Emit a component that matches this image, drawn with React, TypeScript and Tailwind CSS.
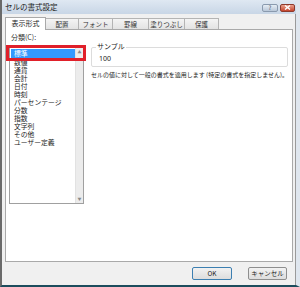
const jp = { fontFamily: '"Meiryo UI", "Noto Sans CJK JP", "Noto Sans", sans-serif' };

const categories = ['数値', '通貨', '会計', '日付', '時刻', 'パーセンテージ', '分数', '指数', '文字列', 'その他', 'ユーザー定義'];

const tabs = [
  { label: '配置', w: 'w-[33px]' },
  { label: 'フォント', w: 'w-[34px]' },
  { label: '罫線', w: 'w-[36px]' },
  { label: '塗りつぶし', w: 'w-[36px]' },
  { label: '保護', w: 'w-[34px]' },
];

export default function App() {
  return (
    <div
      style={jp}
      className="w-[300px] h-[287px] flex flex-col bg-[#f0f0f0] border-l-2 border-l-[#6a6a6a] border-r-4 border-r-[#dfe6ee] border-b-2 border-b-[#1c4d5d] text-[#1b1b1b] overflow-hidden"
    >
      {/* title bar */}
      <div className="h-[14px] shrink-0 flex items-center bg-gradient-to-b from-[#dfe8f2] to-[#c8d6e6] pl-[3px] pr-[1px]">
        <span className="text-[7.5px] leading-none text-[#222]">セルの書式設定</span>
        <div className="ml-auto flex gap-[2px] pt-[1px]">
          <div className="w-[16px] h-[8px] rounded-[2px] border border-[#8a9aae] bg-gradient-to-b from-[#e6edf5] to-[#b9c7d8] flex items-center justify-center text-[6px] leading-none text-[#3a4a5e]">?</div>
          <div className="w-[15px] h-[8px] rounded-[2px] border border-[#8d3a2c] bg-gradient-to-b from-[#e9a08e] to-[#c4412a] flex items-center justify-center">
            <svg width="7" height="5" viewBox="0 0 7 5">
              <path d="M1 0.5 L6 4.5 M6 0.5 L1 4.5" stroke="#fff" strokeWidth="1.4" />
            </svg>
          </div>
        </div>
      </div>

      <div className="flex-1 flex flex-col pl-[3px] border-r border-r-[#9a9a9a]">
        {/* tabs */}
        <div className="h-[15px] flex items-end">
          <div className="w-[41px] h-[13px] bg-white border border-b-0 border-[#a9a9a9] flex items-center justify-center text-[7px] leading-none relative z-10 -mb-[1px] pb-[1px]">
            表示形式
          </div>
          {tabs.map((t) => (
            <div
              key={t.label}
              className={`${t.w} h-[11px] border border-b-0 border-l-0 border-[#b4b4b4] bg-gradient-to-b from-[#f4f4f4] to-[#e3e3e3] flex items-center justify-center text-[6.5px] leading-none text-[#333]`}
            >
              {t.label}
            </div>
          ))}
        </div>

        {/* panel */}
        <div className="w-[288px] h-[233px] bg-white border border-[#a9a9a9] flex gap-[7px] pl-[3px] pt-[4px]">
          {/* category list */}
          <div className="w-[78px] flex flex-col">
            <span className="text-[7px] leading-none pl-[2px] text-[#333]">分類(C):</span>
            <div className="relative mt-[6px] h-[157px] border border-[#a0a0a0] bg-white flex">
              <div className="flex-1 flex flex-col pt-[1px] pl-[1px]">
                <div className="h-[9px] bg-[#3399ff] text-white text-[6.8px] leading-[9px] pl-[3px]">標準</div>
                {categories.map((c) => (
                  <div key={c} className="h-[8px] text-[6.8px] leading-[8px] pl-[3px] whitespace-nowrap">
                    {c}
                  </div>
                ))}
              </div>
              <div className="w-[8px] bg-[#ececec] border-l border-[#e2e2e2] flex flex-col justify-between items-center py-[2px] text-[4px] leading-none text-[#8a8a8a]">
                <span>▲</span>
                <span>▼</span>
              </div>
              {/* red highlight */}
              <div className="absolute -left-[4px] -right-[3px] -top-[3px] h-[16px] border-[3px] border-[#e0202a]" />
            </div>
          </div>

          {/* right side */}
          <div className="flex-1 flex flex-col pt-[13px] pr-[4px]">
            <div className="relative h-[20px] border border-[#dcdcdc] rounded-[2px] flex items-center pl-[7px] pt-[3px]">
              <span className="absolute -top-[5px] left-[4px] bg-white px-[1px] text-[7px] leading-none">サンプル</span>
              <span className="text-[7px] leading-none" style={{ fontFamily: '"Segoe UI", "Noto Sans", sans-serif' }}>100</span>
            </div>
            <p className="mt-[5px] text-[6px] leading-none whitespace-nowrap">
              セルの値に対して一般の書式を適用します (特定の書式を指定しません)。
            </p>
          </div>
        </div>

        {/* buttons */}
        <div className="flex-1 flex justify-end items-center gap-[16px] pr-[8px] pb-[1px]">
          <button className="w-[40px] h-[13px] rounded-[2px] border border-[#3c7fb1] bg-gradient-to-b from-[#f2f2f2] to-[#dddddd] text-[6.5px] leading-none text-[#222]">
            OK
          </button>
          <button className="w-[39px] h-[13px] rounded-[2px] border border-[#8e8e8e] bg-gradient-to-b from-[#f2f2f2] to-[#dddddd] text-[6.5px] leading-none text-[#222]">
            キャンセル
          </button>
        </div>
      </div>
    </div>
  );
}
